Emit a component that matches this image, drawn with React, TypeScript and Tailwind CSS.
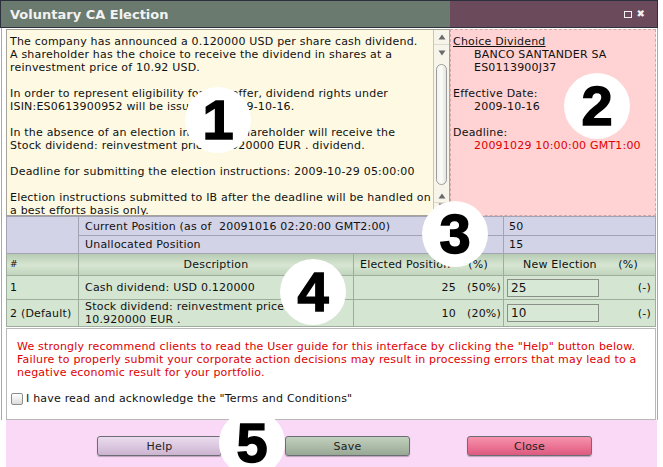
import React from 'react';

const Badge: React.FC<{ n: string; className: string }> = ({ n, className }) => (
  <div
    className={`absolute w-[66px] h-[66px] rounded-full bg-white flex items-center justify-center font-['Liberation_Sans',sans-serif] font-bold text-[56px] leading-none tracking-normal text-black [-webkit-text-stroke:1.5px_black] ${className}`}
  >
    {n}
  </div>
);

const Up = () => (
  <svg width="8" height="6" viewBox="0 0 8 6">
    <path d="M4 0.5 L7.5 5.5 L0.5 5.5 Z" fill="#6a6a6a" />
  </svg>
);
const Down = () => (
  <svg width="8" height="6" viewBox="0 0 8 6">
    <path d="M0.5 0.5 L7.5 0.5 L4 5.5 Z" fill="#6a6a6a" />
  </svg>
);

const ScrollBar: React.FC = () => (
  <div className="w-[16px] h-full flex flex-col items-center border-l border-[#c9c6b8] bg-[#f7f4ea]">
    <div className="h-[15px] w-full flex items-center justify-center border-b border-[#dedad0]"><Up /></div>
    <div className="h-[15px] w-full flex items-center justify-center"><Down /></div>
    <div className="flex-1 w-full px-[2px] py-[4px]">
      <div className="h-full rounded-full border border-[#9c9c9c] bg-gradient-to-r from-[#f2f2ee] via-[#fbfbf8] to-[#e4e4de]" />
    </div>
    <div className="h-[14px] w-full flex items-center justify-center border-b border-[#dedad0]"><Up /></div>
    <div className="h-[12px] w-full flex items-start justify-center"><Down /></div>
  </div>
);

const btn = 'w-[125px] h-[20px] rounded-[3px] border border-[#6c6c74] flex items-center justify-center text-[11px] text-[#222] shadow-[0_1px_1px_rgba(0,0,0,0.25)]';

const App: React.FC = () => {
  return (
    <div className="w-[663px] h-[467px] bg-white relative overflow-hidden font-['DejaVu_Sans',sans-serif] text-[11px] leading-[13px] tracking-[0.2px] text-[#111]">
      {/* Title bar */}
      <div className="h-[28px] w-[658px] flex border border-[#2c303c]">
        <div className="w-[449px] bg-[#6b7a6e] flex items-center pl-[9px] font-bold text-[13px] tracking-normal text-[#f2f2f2]">
          Voluntary CA Election
        </div>
        <div className="flex-1 bg-[#6a4a5b] flex items-center justify-end pr-[12px] gap-[4px]">
          <div className="w-[8px] h-[7px] border border-[#f2f2f2]" />
          <span className="text-[10px] leading-none font-bold text-[#f2f2f2]">✖</span>
        </div>
      </div>

      <div className="ml-[1px] w-[657px] border-l border-r border-[#a9a9a9] pl-[4px] pr-[1px] pt-[1px]">
        {/* Top section */}
        <div className="h-[187px] flex">
          <div className="w-[444px] h-full flex bg-[#fdf9e3] border border-[#a6a39a]">
            <div className="flex-1 overflow-hidden whitespace-nowrap pl-[3px] pt-[5px]">
              <p>The company has announced a 0.120000 USD per share cash dividend.</p>
              <p>A shareholder has the choice to receive the dividend in shares at a</p>
              <p>reinvestment price of 10.92 USD.</p>
              <p className="mt-[13px]">In order to represent eligibility for this offer, dividend rights under</p>
              <p>ISIN:ES0613900952 will be issued on 2009-10-16.</p>
              <p className="mt-[13px]">In the absence of an election in time, a shareholder will receive the</p>
              <p>Stock dividend: reinvestment price 10.920000 EUR . dividend.</p>
              <p className="mt-[13px]">Deadline for submitting the election instructions: 2009-10-29 05:00:00</p>
              <p className="mt-[13px]">Election instructions submitted to IB after the deadline will be handled on</p>
              <p>a best efforts basis only.</p>
            </div>
            <ScrollBar />
          </div>
          <div className="flex-1 h-full bg-[#ffd3d3] border border-dashed border-[#cfa9a9] pl-[2px] pt-[5px]">
            <p className="underline">Choice Dividend</p>
            <p className="pl-[21px]">BANCO SANTANDER SA</p>
            <p className="pl-[21px]">ES0113900J37</p>
            <p className="mt-[13px]">Effective Date:</p>
            <p className="pl-[21px]">2009-10-16</p>
            <p className="mt-[13px]">Deadline:</p>
            <p className="pl-[21px] text-[#e00000]">20091029 10:00:00 GMT1:00</p>
          </div>
        </div>

        {/* Positions + elections table */}
        <table className="w-[649px] border-collapse table-fixed">
          <colgroup>
            <col className="w-[72px]" />
            <col className="w-[275px]" />
            <col className="w-[150px]" />
            <col className="w-[152px]" />
          </colgroup>
          <tbody>
            <tr className="h-[19px] bg-[#d3d3e7]">
              <td rowSpan={2} className="border border-[#a3a3b3]" />
              <td colSpan={2} className="border border-[#a3a3b3] pl-[6px] whitespace-pre">Current Position (as of  20091016 02:20:00 GMT2:00)</td>
              <td className="border border-[#a3a3b3] pl-[5px]">50</td>
            </tr>
            <tr className="h-[18px] bg-[#d3d3e7]">
              <td colSpan={2} className="border border-[#a3a3b3] pl-[6px]">Unallocated Position</td>
              <td className="border border-[#a3a3b3] pl-[5px]">15</td>
            </tr>
            <tr className="h-[22px] bg-gradient-to-b from-[#b7cbb3] via-[#d6e6d2] to-[#bfd2bb]">
              <td className="border border-[#9fae9c] pl-[3px] text-[9px]">#</td>
              <td className="border border-[#9fae9c] text-center">Description</td>
              <td className="border border-[#9fae9c] pl-[6px] pr-[15px]">
                <div className="flex justify-between whitespace-nowrap"><span>Elected Position</span><span>(%)</span></div>
              </td>
              <td className="border border-[#9fae9c] pl-[19px] pr-[17px]">
                <div className="flex justify-between whitespace-nowrap"><span>New Election</span><span>(%)</span></div>
              </td>
            </tr>
            <tr className="h-[24px] bg-[#d4e5d2]">
              <td className="border border-[#9fae9c] pl-[3px]">1</td>
              <td className="border border-[#9fae9c] pl-[6px]">Cash dividend: USD 0.120000</td>
              <td className="border border-[#9fae9c] pr-[2px]">
                <div className="flex justify-end gap-[11px]"><span>25</span><span>(50%)</span></div>
              </td>
              <td className="border border-[#9fae9c] pl-[3px] pr-[4px]">
                <div className="flex items-center justify-between">
                  <div className="w-[92px] h-[18px] border border-[#8a8f88] bg-[#d8e8d6] pl-[3px] text-[12px] leading-[16px]">25</div>
                  <span>(-)</span>
                </div>
              </td>
            </tr>
            <tr className="h-[27px] bg-[#d4e5d2]">
              <td className="border border-[#9fae9c] pl-[3px] whitespace-nowrap">2 (Default)</td>
              <td className="border border-[#9fae9c] pl-[6px]">
                <p>Stock dividend: reinvestment price</p>
                <p>10.920000 EUR .</p>
              </td>
              <td className="border border-[#9fae9c] pr-[2px]">
                <div className="flex justify-end gap-[11px]"><span>10</span><span>(20%)</span></div>
              </td>
              <td className="border border-[#9fae9c] pl-[3px] pr-[4px]">
                <div className="flex items-center justify-between">
                  <div className="w-[92px] h-[18px] border border-[#8a8f88] bg-[#d8e8d6] pl-[3px] text-[12px] leading-[16px]">10</div>
                  <span>(-)</span>
                </div>
              </td>
            </tr>
          </tbody>
        </table>

        {/* Notice panel */}
        <div className="h-[92px] mt-[1px] border border-[#b9b9b9] bg-white pl-[10px] pt-[11px] whitespace-nowrap">
          <p className="text-[#e00000]">We strongly recommend clients to read the User guide for this interface by clicking the "Help" button below.</p>
          <p className="text-[#e00000]">Failure to properly submit your corporate action decisions may result in processing errors that may lead to a</p>
          <p className="text-[#e00000]">negative economic result for your portfolio.</p>
          <label className="flex items-center gap-[3px] mt-[13px] -ml-[6px]">
            <span className="w-[12px] h-[12px] rounded-[2px] border border-[#8c8c8c] bg-gradient-to-b from-white to-[#dcdcdc]" />
            <span>I have read and acknowledge the "Terms and Conditions"</span>
          </label>
        </div>
      </div>

      {/* Footer */}
      <div className="ml-[6px] w-[651px] h-[47px] bg-[#f9d9f6] flex items-start pt-[16px]">
        <div className={`${btn} ml-[91px] bg-gradient-to-b from-[#eadcee] via-[#dcc8e0] to-[#cbb4d0]`}>Help</div>
        <div className={`${btn} ml-[63px] bg-gradient-to-b from-[#c2d0be] via-[#aebdaa] to-[#98a894]`}>Save</div>
        <div className={`${btn} ml-[57px] bg-gradient-to-b from-[#f592ac] via-[#ec7596] to-[#dc5a80]`}>Close</div>
      </div>

      <Badge n="1" className="left-[185px] top-[87px]" />
      <Badge n="2" className="left-[564px] top-[73px]" />
      <Badge n="3" className="left-[422px] top-[201px]" />
      <Badge n="4" className="left-[280px] top-[259px]" />
      <Badge n="5" className="left-[219px] top-[410px]" />
    </div>
  );
};

export default App;
